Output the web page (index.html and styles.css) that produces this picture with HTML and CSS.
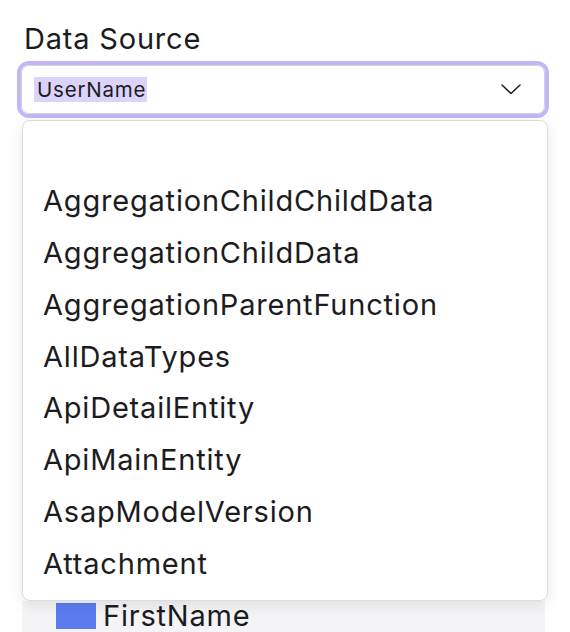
FILE: index.html
```html
<!DOCTYPE html>
<html lang="en">
<head>
    <meta charset="UTF-8">
    <meta name="viewport" content="width=device-width, initial-scale=1.0">
    <title>Data Source</title>
    <link rel="stylesheet" href="styles.css">
</head>
<body>
    <div class="field">
        <label class="field-label">Data Source</label>
        <div class="select">
            <span class="select-value">UserName</span>
            <svg class="chevron" width="20" height="11" viewBox="0 0 20 11">
                <path d="M1 1 L10 9.5 L19 1" fill="none" stroke="#222" stroke-width="1.6" stroke-linecap="round" stroke-linejoin="round"/>
            </svg>
        </div>
        <ul class="menu">
            <li class="menu-item"></li>
            <li class="menu-item">AggregationChildChildData</li>
            <li class="menu-item">AggregationChildData</li>
            <li class="menu-item">AggregationParentFunction</li>
            <li class="menu-item">AllDataTypes</li>
            <li class="menu-item">ApiDetailEntity</li>
            <li class="menu-item">ApiMainEntity</li>
            <li class="menu-item">AsapModelVersion</li>
            <li class="menu-item">Attachment</li>
        </ul>
        <div class="columns">
            <div class="column-row">
                <span class="swatch"></span>
                <span class="column-name">FirstName</span>
            </div>
        </div>
    </div>
</body>
</html>
```

FILE: styles.css
```css
body {
    margin: 0;
    background: #fff;
    font-family: Inter, "Noto Sans", sans-serif;
    color: #1c1c1e;
    letter-spacing: 0.05em;
}
.field {
    padding: 23px 21px 0 21px;
    width: 526px;
}
.field-label {
    display: block;
    padding-left: 3px;
    font-size: 29px;
    line-height: 32px;
    margin-bottom: 10px;
}
.select {
    display: flex;
    align-items: center;
    justify-content: space-between;
    width: 524px;
    height: 49px;
    box-sizing: border-box;
    padding: 0 23px 0 12px;
    border: 1px solid #d6d3dc;
    border-radius: 8px;
    box-shadow: 0 0 0 4px #c4b6f6;
}
.select-value {
    font-size: 20.5px;
    line-height: 25px;
    background: #dcd3fb;
    padding: 0 1px 0 3px;
}
.chevron {
    display: block;
}
.menu {
    list-style: none;
    margin: 6px 0 0 1px;
    padding: 2px 0 10px 0;
    width: 526px;
    box-sizing: border-box;
    border: 1px solid #dcdcdf;
    border-radius: 8px;
    background: #fff;
    box-shadow: 0 4px 14px rgba(0, 0, 0, 0.09);
    position: relative;
    z-index: 1;
}
.menu-item {
    height: 51.9px;
    line-height: 51.9px;
    padding-left: 20px;
    font-size: 29px;
    white-space: nowrap;
}
.columns {
    background: #f4f4f7;
    margin-left: 1px;
    width: 523px;
    height: 40px;
}
.column-row {
    display: flex;
    align-items: center;
    padding: 2px 0 0 34px;
    height: 26px;
}
.swatch {
    width: 40px;
    height: 26px;
    background: #5b7cf0;
    margin-right: 7px;
}
.column-name {
    font-size: 29px;
    line-height: 26px;
}
```
